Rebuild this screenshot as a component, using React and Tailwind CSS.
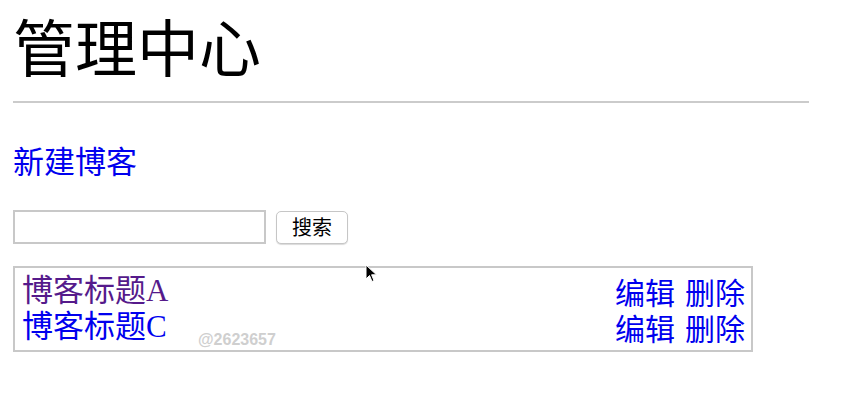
import React from "react";

const blogs = [
  { id: "a", title: "博客标题A", visited: true },
  { id: "c", title: "博客标题C", visited: false },
];

export default function App() {
  return (
    <div className="relative w-[851px] h-[401px] bg-white overflow-hidden pl-[13px] pt-[20px] font-['Liberation_Serif','Noto_Sans_CJK_SC',serif]">
      <h1 className="text-[62px] leading-[62px] text-black">管理中心</h1>
      <hr className="w-[796px] mt-[19px] border-0 border-t-2 border-[#cbcbcb]" />

      <a href="#" className="block mt-[44px] text-[31px] leading-[31px] text-[#0000ee] w-fit">
        新建博客
      </a>

      <div className="flex items-center mt-[32px]">
        <input className="w-[253px] h-[34px] border-2 border-[#c8c8c8] bg-white outline-none" />
        <button className="ml-[10px] w-[72px] h-[33px] rounded-[5px] border border-[#c6c6c6] bg-white shadow-[0_1px_1px_rgba(0,0,0,0.15)] text-[20px] text-black font-['Noto_Sans_CJK_SC',sans-serif]">
          搜索
        </button>
      </div>

      <ul className="mt-[22px] w-[740px] border-2 border-[#c8c8c8] pl-[7px] pr-[6px] pt-[5px] pb-[5px]">
        {blogs.map((b) => (
          <li key={b.id} className="flex justify-between items-center h-[36px] text-[31px] leading-[36px]">
            <a href="#" className={b.visited ? "text-[#551a8b]" : "text-[#0000ee]"}>
              {b.title}
            </a>
            <span className="flex gap-[10px] text-[#0000ee] font-['Noto_Sans_CJK_SC',sans-serif] text-[30px] leading-[36px]">
              <a href="#">编辑</a>
              <a href="#">删除</a>
            </span>
          </li>
        ))}
      </ul>

      <div className="absolute left-[198px] top-[330px] text-[16px] leading-[20px] font-bold text-[#cfcfcf] font-['Liberation_Sans',sans-serif]">
        @2623657
      </div>

      <svg className="absolute left-[365px] top-[264px]" width="14" height="20" viewBox="0 0 14 20">
        <path d="M1 1 L1 15 L4.5 11.5 L7 17.5 L9 16.6 L6.6 10.8 L11.5 10.8 Z" fill="#000" stroke="#fff" strokeWidth="1" />
      </svg>
    </div>
  );
}
